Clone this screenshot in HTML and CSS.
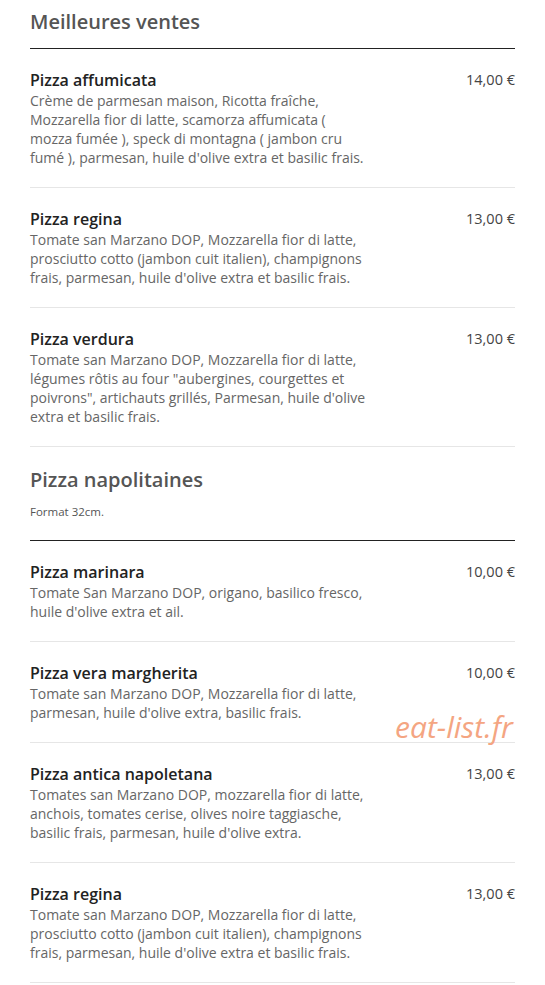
FILE: index.html
```html
<!DOCTYPE html>
<html>
<head>
    <title>Menu - Pizzas</title>
    <link rel="stylesheet" href="styles.css">
</head>
<body>
    <div class="menu">
        <div class="section">
            <div class="section-head">
                <h2>Meilleures ventes</h2>
            </div>
            <div class="item">
                <div class="item-info">
                    <div class="item-name">Pizza affumicata</div>
                    <div class="item-desc">Crème de parmesan maison, Ricotta fraîche, Mozzarella fior di latte, scamorza affumicata ( mozza fumée ), speck di montagna ( jambon cru fumé ), parmesan, huile d'olive extra et basilic frais.</div>
                </div>
                <div class="item-price">14,00 €</div>
            </div>
            <div class="item">
                <div class="item-info">
                    <div class="item-name">Pizza regina</div>
                    <div class="item-desc">Tomate san Marzano DOP, Mozzarella fior di latte, prosciutto cotto (jambon cuit italien), champignons frais, parmesan, huile d'olive extra et basilic frais.</div>
                </div>
                <div class="item-price">13,00 €</div>
            </div>
            <div class="item">
                <div class="item-info">
                    <div class="item-name">Pizza verdura</div>
                    <div class="item-desc">Tomate san Marzano DOP, Mozzarella fior di latte, légumes rôtis au four "aubergines, courgettes et poivrons", artichauts grillés, Parmesan, huile d'olive extra et basilic frais.</div>
                </div>
                <div class="item-price">13,00 €</div>
            </div>
        </div>

        <div class="section">
            <div class="section-head">
                <h2>Pizza napolitaines</h2>
                <p class="section-note">Format 32cm.</p>
            </div>
            <div class="item">
                <div class="item-info">
                    <div class="item-name">Pizza marinara</div>
                    <div class="item-desc">Tomate San Marzano DOP, origano, basilico fresco, huile d'olive extra et ail.</div>
                </div>
                <div class="item-price">10,00 €</div>
            </div>
            <div class="item">
                <div class="item-info">
                    <div class="item-name">Pizza vera margherita</div>
                    <div class="item-desc">Tomate san Marzano DOP, Mozzarella fior di latte, parmesan, huile d'olive extra, basilic frais.</div>
                </div>
                <div class="item-price">10,00 €</div>
            </div>
            <div class="item">
                <div class="item-info">
                    <div class="item-name">Pizza antica napoletana</div>
                    <div class="item-desc">Tomates san Marzano DOP, mozzarella fior di latte, anchois, tomates cerise, olives noire taggiasche, basilic frais, parmesan, huile d'olive extra.</div>
                </div>
                <div class="item-price">13,00 €</div>
            </div>
            <div class="item">
                <div class="item-info">
                    <div class="item-name">Pizza regina</div>
                    <div class="item-desc">Tomate san Marzano DOP, Mozzarella fior di latte, prosciutto cotto (jambon cuit italien), champignons frais, parmesan, huile d'olive extra et basilic frais.</div>
                </div>
                <div class="item-price">13,00 €</div>
            </div>
        </div>

        <div class="watermark">eat-list.fr</div>
    </div>
</body>
</html>
```

FILE: styles.css
```css
body {
    margin: 0;
    font-family: "Open Sans", "Liberation Sans", sans-serif;
    background: #fff;
    color: #666;
}
.menu {
    position: relative;
    padding: 9px 30px 0 30px;
}
.section + .section .section-head {
    padding-top: 20px;
}
.section-head {
    border-bottom: 1px solid #222;
    padding-bottom: 13px;
}
.section-head h2 {
    margin: 0;
    font-size: 20px;
    line-height: 26px;
    font-weight: 600;
    color: #555;
}
.section-note {
    margin: 12px 0 8px 0;
    font-size: 11.5px;
    line-height: 14px;
    color: #555;
}
.item {
    display: flex;
    justify-content: space-between;
    padding: 20px 0;
    border-bottom: 1px solid #e6e6e6;
}
.item-info {
    width: 340px;
}
.item-name {
    font-size: 16px;
    line-height: 22px;
    font-weight: 600;
    color: #222;
}
.item-desc {
    font-size: 14px;
    line-height: 19px;
    color: #666;
}
.item-price {
    font-size: 14.5px;
    line-height: 22px;
    color: #444;
    white-space: nowrap;
}
.watermark {
    position: absolute;
    left: 395px;
    top: 707px;
    font-size: 30px;
    font-style: italic;
    color: #f4a582;
    line-height: 40px;
}
```
